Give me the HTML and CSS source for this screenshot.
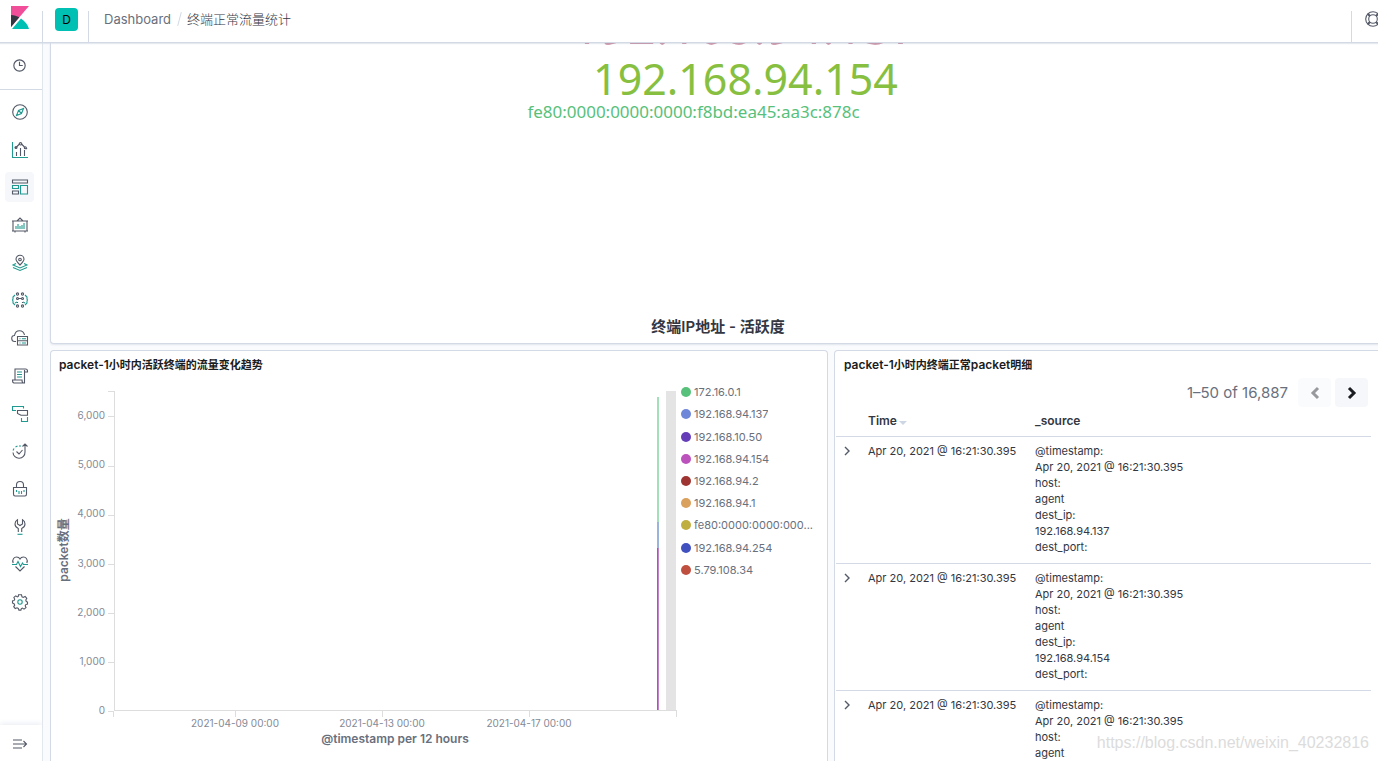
FILE: index.html
```html
<!DOCTYPE html>
<html lang="zh-CN">
<head>
<meta charset="utf-8">
<title>终端正常流量统计</title>
<link rel="stylesheet" href="styles.css">
</head>
<body>
<div class="app">
  <header class="header">
    <a class="logo" href="#" aria-label="Kibana">
      <svg width="18" height="24" viewBox="0 0 18 24"><path fill="#f04e98" d="M0 0h18L0 21z"/><path fill="#343741" d="M0 9c3 0 6 1 8.300 2.300L0 21z"/><path fill="#00bfb3" d="M10 12.500c4 2.500 7 6.500 8 10.500H1z"/></svg>
    </a>
    <button class="space" aria-label="Space"><span class="space-badge">D</span></button>
    <nav class="crumbs"><a href="#">Dashboard</a><span class="slash"></span><span class="current">终端正常流量统计</span></nav>
    <button class="help" aria-label="Help">
      <svg class="icon" viewBox="0 0 16 16"><circle cx="8" cy="8" r="7.300"/><circle cx="8" cy="8" r="4.300"/><path d="M3 2.300 5.300 4.600M2.300 3l2.300 2.300M13 2.300l-2.300 2.300M13.700 3l-2.300 2.300M3 13.700l2.300-2.300M2.300 13l2.300-2.300M13 13.700l-2.300-2.300M13.700 13l-2.300-2.300"/></svg>
    </button>
  </header>
  <aside class="side">
    <div class="recent"><a href="#" aria-label="Recently viewed"><svg class="icon small" viewBox="0 0 16 16"><circle cx="8" cy="8" r="7"/><path d="M8 3.500V8h4"/></svg></a></div>
    <nav class="nav">
      <a href="#" aria-label="Discover"><svg class="icon" viewBox="0 0 16 16"><circle cx="8" cy="8" r="7.300"/><path class="t" d="m11.500 4.500-2 5-5 2 2-5zM6.500 6.500l3 3"/></svg></a>
      <a href="#" aria-label="Visualize"><svg class="icon" viewBox="0 0 16 16"><path class="t" d="M.5 0v15.500H16"/><path d="M4.500 10v4M8.500 6v8M12.500 8v6M3 6l1.500-1 3-3M9.500 2l3 3M14 6l1 1"/><circle cx="8.500" cy="1.800" r="1.200"/><circle cx="4" cy="5.500" r="1"/><circle cx="13.300" cy="5.700" r="1"/></svg></a>
      <a class="active" href="#" aria-label="Dashboard"><svg class="icon" viewBox="0 0 16 16"><path d="M.5 1h15v3H.5zM.5 12h6v3H.5z"/><path class="t" d="M.5 6.500h6v3H.5zM8.500 6.500h7V15h-7z"/></svg></a>
      <a href="#" aria-label="Canvas"><svg class="icon" viewBox="0 0 16 16"><path d="M1 4h14v10H1zM0 4h16M0 14h16M5 4l3-3 3 3M3 14v1.500M13 14v1.500"/><path class="t" d="M4 9v3M6 7v5M8 9v3M10 8v4M12 6v6"/></svg></a>
      <a href="#" aria-label="Maps"><svg class="icon" viewBox="0 0 16 16"><path d="M8 10C5.500 7.500 4 6 4 4.300a4 4 0 0 1 8 0C12 6 10.500 7.500 8 10z"/><circle cx="8" cy="4.500" r="1.300"/><path class="t" d="M4 8.500 1 10l7 3 7-3-3-1.500M1 12.500l7 3 7-3"/></svg></a>
      <a href="#" aria-label="Machine Learning"><svg class="icon" viewBox="0 0 16 16"><circle cx="5.500" cy="2" r="1.100"/><circle cx="10.500" cy="2" r="1.100"/><circle cx="5.500" cy="6.500" r="1"/><circle cx="10.500" cy="6.500" r="1"/><circle cx="5.500" cy="14" r="1.100"/><circle cx="10.500" cy="14" r="1.100"/><path d="M5.500 10v1M10.500 10v1M7 6.500h2"/><path class="t" d="M3 3 1 5v2l-.5 1 .5 1v2l2 2M13 3l2 2v2l.5 1-.5 1v2l-2 2M5 10l-2 1M11 10l2 1"/></svg></a>
      <a href="#" aria-label="Metrics"><svg class="icon" viewBox="0 0 16 16"><path d="M4 11.500H3a3 3 0 0 1-.5-6C3 2.500 5 .7 7.500.7S12 2.500 12.500 5"/><path d="M5.500 6.500h10v4.300h-10zM5.500 10.800h10V15h-10z"/><path class="t" d="M7.500 8.700h1M10 8.700h4M7.500 13h1M10 13h4"/></svg></a>
      <a href="#" aria-label="Logs"><svg class="icon" viewBox="0 0 16 16"><path d="M3 12V1h10.500c1 0 2 .8 2 2v1h-3V15H2c-1 0-1.500-1-1.500-3H10c0 2 .5 3 1.500 3M12.500 4V2"/><path class="t" d="M5 4h5M5 6.500h5M5 9h5"/></svg></a>
      <a href="#" aria-label="APM"><svg class="icon" viewBox="0 0 16 16"><path class="t" d="M4 4.500H.5v-4h11v2M9.500 12v3.500h6V11"/><path d="M5.500 4.500h10v4.800H9L5.500 7.500z"/></svg></a>
      <a href="#" aria-label="Uptime"><svg class="icon" viewBox="0 0 16 16"><path d="M1 9.500a6 6 0 0 0 12-.5V1M10.500 3.500 13 1l2.500 2.500M4.500 8.500 7 11l3.500-4"/><path class="t" d="M1 7.500 2 5.500M3.500 4 5.500 3M7 3h2"/></svg></a>
      <a href="#" aria-label="SIEM"><svg class="icon" viewBox="0 0 16 16"><path d="M1.500 6.500h13V13c0 1-.5 2-1.500 2H3c-1 0-1.500-1-1.500-2zM4.500 6.500V4a3.500 3.500 0 0 1 7 0v2.500"/><path class="t" d="M4.500 9v2M7 10v3M9.500 10v3M12 9v2"/></svg></a>
      <a href="#" aria-label="Dev Tools"><svg class="icon" viewBox="0 0 16 16"><path d="M6.300 13V9.500C4 8.500 3 7 3 5c0-2 1-3.500 2.500-4.300V5L8 6.500 10.500 5V.7C12 1.500 13 3 13 5c0 2-1 3.500-3.300 4.500V13"/><path class="t" d="M5.500 15.300h5"/></svg></a>
      <a href="#" aria-label="Stack Monitoring"><svg class="icon" viewBox="0 0 16 16"><path d="M1.200 7C-.3 3 2.500 1 4.500 1 6.500 1 7.500 2 8 3c.5-1 1.500-2 3.500-2s4.800 2 3.300 6M3.500 10.500 8 15l4.500-4.500"/><path class="t" d="M0 8.500h4.500l1.500-3 2.500 5L10.500 7l1 1.500H16"/></svg></a>
      <a href="#" aria-label="Management"><svg class="icon" viewBox="0 0 16 16"><path d="M6.500.8h3l.5 2 1.200.6 1.900-1 1.700 2-1 1.600.5 1.500 1.200.5v2l-1.700.6-.6 1.200.8 1.800-2 1.500-1.600-1-1 .5-.5 1.500h-2l-.6-1.700-1.300-.6-1.800.8-1.500-1.900 1-1.600-.5-1.200L.5 9V7l1.700-.6.5-1.200-.8-1.800 1.900-1.500 1.500 1 1-.5z"/><circle class="t" cx="8" cy="8" r="2.200"/></svg></a>
    </nav>
    <button class="collapse" aria-label="Expand"><svg class="icon" viewBox="0 0 16 16"><path d="M1 4h9M1 8h13M1 12h9M11.500 5l3 3-3 3"/></svg></button>
  </aside>
  <main class="main">
    <div class="dash">
      <section class="panel cloud">
        <svg class="cloud-chart" viewBox="0 0 1335 270" preserveAspectRatio="xMidYMin meet">
          <text x="695" y="1" font-size="49" fill="#aa3a5a">192.168.94.137</text>
          <text x="695" y="52" font-size="43" fill="#87c040">192.168.94.154</text>
          <text x="643" y="75" font-size="17" fill="#57c17b">fe80:0000:0000:0000:f8bd:ea45:aa3c:878c</text>
        </svg>
        <div class="cloud-label">终端IP地址 - 活跃度</div>
      </section>
      <section class="panel">
        <h2 class="title">packet-1<span class="han">小时内活跃终端的流量变化趋势</span></h2>
        <div class="viz">
          <svg class="chart" viewBox="0 0 627 383">
            <path class="axis" d="M63.500 13v320M57 13.500h6M57 38.500h6M57 88.500h6M57 137.500h6M57 186.500h6M57 235.500h6M57 284.500h6M57 333.500h6M63 332.500h563M62.500 333v6M184.500 333v6M331.500 333v6M478.500 333v6M625.500 333v6"/>
            <rect x="615" y="13" width="10" height="319" fill="#e4e4e4"/>
            <rect x="606" y="19" width="2" height="125" fill="#a3dfb8"/>
            <rect x="606" y="144" width="2" height="26" fill="#9ab4dc"/>
            <rect x="606" y="170" width="1" height="162" fill="#9160b8"/>
            <rect x="607" y="170" width="1" height="162" fill="#c583cf"/>
            <g class="tick end">
              <text x="54" y="41">6,000</text><text x="54" y="90">5,000</text><text x="54" y="139">4,000</text><text x="54" y="189">3,000</text><text x="54" y="238">2,000</text><text x="54" y="287">1,000</text><text x="54" y="336">0</text>
            </g>
            <g class="tick mid">
              <text x="184" y="349">2021-04-09 00:00</text><text x="331" y="349">2021-04-13 00:00</text><text x="478" y="349">2021-04-17 00:00</text>
            </g>
            <text class="axis-title" x="344" y="365">@timestamp per 12 hours</text>
            <text class="axis-title" transform="translate(17 172) rotate(-90)">packet数量</text>
          </svg>
          <ul class="legend">
            <li><i class="dot c1"></i><span>172.16.0.1</span></li>
            <li><i class="dot c2"></i><span>192.168.94.137</span></li>
            <li><i class="dot c3"></i><span>192.168.10.50</span></li>
            <li><i class="dot c4"></i><span>192.168.94.154</span></li>
            <li><i class="dot c5"></i><span>192.168.94.2</span></li>
            <li><i class="dot c6"></i><span>192.168.94.1</span></li>
            <li><i class="dot c7"></i><span>fe80:0000:0000:000...</span></li>
            <li><i class="dot c8"></i><span>192.168.94.254</span></li>
            <li><i class="dot c9"></i><span>5.79.108.34</span></li>
          </ul>
        </div>
      </section>
      <section class="panel detail">
        <h2 class="title">packet-1<span class="han">小时内终端正常</span>packet<span class="han">明细</span></h2>
        <div class="pager">
          <span>1–50 of 16,887</span>
          <button disabled aria-label="Previous"><svg width="12" height="14" viewBox="0 0 12 14"><path d="M9 2 4 7l5 5"/></svg></button>
          <button aria-label="Next"><svg width="12" height="14" viewBox="0 0 12 14"><path d="m3 2 5 5-5 5"/></svg></button>
        </div>
        <table class="docs">
          <thead><tr><th class="col-toggle"></th><th class="col-time">Time<i class="sort"></i></th><th>_source</th></tr></thead>
          <tbody>
            <tr><td><button class="toggle" aria-label="Toggle row"><svg width="8" height="10" viewBox="0 0 8 10"><path d="m2 1 4 4-4 4"/></svg></button></td><td>Apr 20, 2021 @ 16:21:30.395</td><td><div class="src">@timestamp:<br>Apr 20, 2021 @ 16:21:30.395<br>host:<br>agent<br>dest_ip:<br>192.168.94.137<br>dest_port:</div></td></tr>
            <tr><td><button class="toggle" aria-label="Toggle row"><svg width="8" height="10" viewBox="0 0 8 10"><path d="m2 1 4 4-4 4"/></svg></button></td><td>Apr 20, 2021 @ 16:21:30.395</td><td><div class="src">@timestamp:<br>Apr 20, 2021 @ 16:21:30.395<br>host:<br>agent<br>dest_ip:<br>192.168.94.154<br>dest_port:</div></td></tr>
            <tr><td><button class="toggle" aria-label="Toggle row"><svg width="8" height="10" viewBox="0 0 8 10"><path d="m2 1 4 4-4 4"/></svg></button></td><td>Apr 20, 2021 @ 16:21:30.395</td><td><div class="src">@timestamp:<br>Apr 20, 2021 @ 16:21:30.395<br>host:<br>agent</div></td></tr>
          </tbody>
        </table>
      </section>
    </div>
  </main>
  <div class="watermark">https://blog.csdn.net/weixin_40232816</div>
</div>
</body>
</html>
```
FILE: styles.css
```css
* { box-sizing: border-box; }
body {
  margin: 0;
  font-family: Inter, "Noto Sans CJK SC", sans-serif;
  font-size: 12px;
  line-height: 16px;
  color: #343741;
}
a { color: inherit; text-decoration: none; }
button { border: 0; padding: 0; background: none; font: inherit; color: inherit; }
svg { display: block; }
.app {
  position: relative;
  display: grid;
  grid-template: auto minmax(0, 1fr) / auto minmax(0, 1fr);
  height: 100vh;
  overflow: hidden;
}

/* Top bar */
.header {
  grid-column: 1 / -1;
  display: flex;
  height: 43px;
  border-bottom: 1px solid #d3dae6;
  box-shadow: 0 1px 1px rgba(211, 218, 230, 0.6);
  background: #fff;
  overflow: hidden;
  z-index: 1;
}
.logo { width: 42px; padding: 6px 11px; }
.space {
  width: 47px;
  margin-top: 11px;
  border: solid #d3dae6;
  border-width: 0 1px;
}
.space-badge {
  display: block;
  width: 23px;
  margin: -14px 0 0 12px;
  border-radius: 4px;
  background: #00bfb3;
  color: #000;
  line-height: 23px;
}
.crumbs {
  flex: 1;
  display: flex;
  align-items: center;
  height: 38px;
  padding-left: 15px;
  font-size: 13px;
  color: #69707d;
}
.slash { width: 1px; height: 14px; margin: 0 7px 0 8px; background: #d3dae6; transform: rotate(15deg); }
.current { color: #343741; font-weight: 300; }
.help { width: 27px; margin-top: 11px; border-left: 1px solid #d3dae6; }
.help .icon { margin: -15px 0 0 13px; }

/* Navigation rail */
.icon { width: 16px; height: 16px; flex: none; fill: none; stroke: #535966; stroke-width: 1.1; overflow: visible; }
.icon.small { width: 13px; height: 13px; stroke-width: 1.4; }
.icon .t { stroke: #209a90; }
.side {
  display: flex;
  flex-direction: column;
  width: 43px;
  border-right: 1px solid #e0e5ee;
  background: #fff;
}
.recent { display: flex; height: 47px; padding: 0 4px 2px 0; border-bottom: 1px solid #d3dae6; }
.recent a { margin: auto; }
.nav { display: grid; grid-auto-rows: 1fr; height: 528px; margin-top: 3px; }
.nav a {
  display: flex;
  align-items: center;
  justify-content: center;
  width: 29px;
  height: 30px;
  margin: auto 0 auto 5px;
  border-radius: 4px;
}
.nav .active { background: #f5f7fa; }
.collapse {
  display: flex;
  align-items: center;
  height: 36px;
  margin-top: auto;
  padding: 2px 0 0 12px;
  box-shadow: 0 -1px 6px #e6eaf1;
}

/* Dashboard */
.main { overflow: hidden; padding-left: 7px; background: #fafbfd; }
.dash {
  display: grid;
  grid-template: auto minmax(0, 1fr) / minmax(0, 778fr) minmax(0, 552fr);
  gap: 6px;
  height: 100%;
  margin-right: -8px;
}
.panel {
  display: flex;
  flex-direction: column;
  overflow: hidden;
  border: 1px solid #d3dae6;
  border-bottom: 0;
  border-radius: 4px 4px 0 0;
  background: #fff;
}
.cloud {
  grid-column: 1 / -1;
  border: solid #d3dae6;
  border-width: 0 1px 1px;
  border-radius: 0 0 4px 4px;
  box-shadow: 0 1px 2px #dfe5ee;
}
.cloud-chart {
  width: 100%;
  height: 274px;
  font-family: "Noto Sans", sans-serif;
  text-anchor: middle;
}
.cloud-label { padding-bottom: 6px; text-align: center; font-size: 15px; font-weight: 600; line-height: 20px; }
.title { margin: 0; padding: 6px 8px 5px; font-size: 12px; font-weight: 600; color: #1a1c21; }
.han { font-size: 11px; }

/* Traffic chart */
.viz { display: flex; }
.chart { flex: 1; min-width: 0; }
.axis { fill: none; stroke: #ddd; }
.tick { font-size: 10px; fill: #848a96; }
.end { text-anchor: end; }
.mid { text-anchor: middle; }
.axis-title { font-size: 12px; font-weight: 600; fill: #69707d; text-anchor: middle; }
.legend {
  display: grid;
  grid-auto-rows: 1fr;
  width: 149px;
  height: 200px;
  margin: 3px 0 0;
  padding: 0 8px 0 3px;
  list-style: none;
  font-size: 11px;
  color: #69707d;
}
.legend li { display: flex; align-items: center; gap: 3px; min-width: 0; }
.legend span { overflow: hidden; text-overflow: ellipsis; white-space: nowrap; }
.dot { flex: none; width: 10px; height: 10px; border-radius: 50%; }
.c1 { background: #57c17b; }
.c2 { background: #6f87d8; }
.c3 { background: #663db8; }
.c4 { background: #bc52bc; }
.c5 { background: #9e3533; }
.c6 { background: #daa05d; }
.c7 { background: #bfaf40; }
.c8 { background: #4050bf; }
.c9 { background: #bf5040; }

/* Document table */
.detail { padding-left: 1px; }
.pager {
  display: flex;
  justify-content: flex-end;
  align-items: center;
  gap: 4px;
  padding: 0 17px 0 0;
  font-size: 15px;
  color: #69707d;
}
.pager span { margin-right: 6px; }
.pager button {
  display: flex;
  align-items: center;
  justify-content: center;
  width: 33px;
  height: 29px;
  border-radius: 4px;
  background: #f5f7fa;
}
.pager svg { fill: none; stroke: #1a1c21; stroke-width: 3; }
.pager button:disabled { background: #fafbfd; }
.pager button:disabled svg { stroke: #98999d; }
.docs { width: calc(100% - 14px); border-collapse: separate; border-spacing: 0; table-layout: fixed; }
.docs th, .docs td { padding: 6px 0 8px; border-bottom: 1px solid #d3dae6; text-align: left; vertical-align: top; }
.docs td { font-size: 11px; }
.docs th { padding: 6px 0 7px; font-weight: 600; }
.col-toggle { width: 32px; }
.col-time { width: 167px; }
.sort {
  display: inline-block;
  margin-left: 2px;
  border: 4px solid transparent;
  border-top-color: #ccd6e4;
  border-bottom: 0;
}
.toggle { display: block; padding: 3px 7px; }
.toggle svg { fill: none; stroke: #535966; stroke-width: 1.4; }

.watermark {
  position: absolute;
  right: 9px;
  bottom: 9px;
  z-index: 2;
  font: 16px/18px "Liberation Sans", sans-serif;
  color: #dcdcdc;
}
```
